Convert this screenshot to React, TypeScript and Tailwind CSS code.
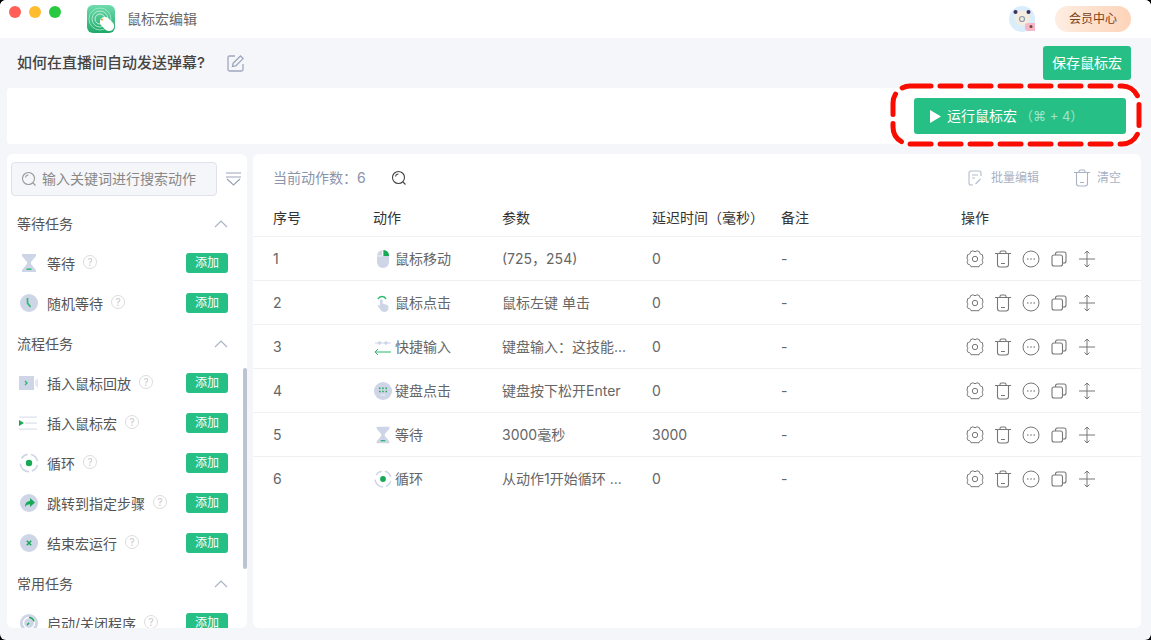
import React from 'react';

const Hourglass = () => (
  <svg width="22" height="22" viewBox="0 0 22 22">
    <path d="M4 2h14v2l-5 6v2l5 6v2H4v-2l5-6v-2L4 4z" fill="#cdd5e6" />
    <path d="M8.500 16.500h5v1.400h-5z" fill="#25b96f" />
  </svg>
);

const Clock = () => (
  <svg width="22" height="22" viewBox="0 0 22 22">
    <circle cx="11" cy="11" r="9" fill="#cdd5e6" />
    <path d="M9.500 6v5l3 4" fill="none" stroke="#25b96f" strokeWidth="1.600" />
  </svg>
);

const Video = () => (
  <svg width="22" height="22" viewBox="0 0 22 22">
    <rect x="1" y="4" width="15" height="14" fill="#cdd5e6" />
    <path d="M17 9l3-3v10l-3-3z" fill="#e4e8f1" />
    <path d="M7 9l2 2-2 2" fill="none" stroke="#25b96f" strokeWidth="1.300" />
  </svg>
);

const ListPlay = () => (
  <svg width="22" height="22" viewBox="0 0 22 22">
    <path d="M1 4.500h18v1.200H1zM7 10.500h12v1.200H7zM1 16.500h18v1.200H1z" fill="#dde2ee" />
    <path d="M1 8l5 3-5 3z" fill="#18a957" />
  </svg>
);

const Loop = () => (
  <svg width="22" height="22" viewBox="0 0 22 22">
    <path d="M3.500 6.500A8.700 8.700 0 0 1 9.500 2.400M13 2.500a8.700 8.700 0 0 1 6.500 6.500M19.500 13a8.700 8.700 0 0 1-5.500 6M11 19.700a8.700 8.700 0 0 1-8.700-8" fill="none" stroke="#cdd5e6" strokeWidth="1.600" />
    <circle cx="11" cy="11" r="3.200" fill="#18a957" />
  </svg>
);

const Jump = () => (
  <svg width="22" height="22" viewBox="0 0 22 22">
    <circle cx="11" cy="11" r="9" fill="#cdd5e6" />
    <path d="M12 6l5 4.500-5 4.500v-2.800c-2.500 0-4 .8-5 2.800 0-3.500 1.800-5.800 5-6z" fill="#18a957" />
  </svg>
);

const Stop = () => (
  <svg width="22" height="22" viewBox="0 0 22 22">
    <circle cx="11" cy="11" r="9" fill="#cdd5e6" />
    <path d="M8.800 8.800l4.400 4.400M13.200 8.800l-4.400 4.400" stroke="#18a957" strokeWidth="1.500" />
  </svg>
);

const Launch = () => (
  <svg width="22" height="22" viewBox="0 0 22 22">
    <circle cx="11" cy="11" r="9" fill="#cdd5e6" />
    <circle cx="11" cy="11" r="5.500" fill="none" stroke="#fff" strokeWidth="1.400" />
    <path d="M11 5.500a5.500 5.500 0 0 1 5 4" fill="none" stroke="#18a957" strokeWidth="1.400" />
    <path d="M9 13l2-2" stroke="#18a957" strokeWidth="1.400" />
  </svg>
);

const MouseMove = () => (
  <svg width="18" height="20" viewBox="0 0 18 20">
    <rect x="3" y="1" width="12" height="18" rx="6" fill="#cdd5e6" />
    <path d="M9.500 1a5.500 5.500 0 0 1 5.500 5.500V7H9.500z" fill="#18a957" />
    <path d="M3 7h5.500V1.200" fill="none" stroke="#fff" strokeWidth=".8" />
  </svg>
);

const MouseClick = () => (
  <svg width="18" height="20" viewBox="0 0 18 20">
    <path d="M4 6a4.500 4.500 0 0 1 8 0" fill="none" stroke="#25b96f" strokeWidth="1.500" />
    <path d="M6 7.500a1.300 1.300 0 0 1 2.600 0v3l4 1.200a2.500 2.500 0 0 1 2 2.500c0 3-1.700 4.800-4.300 4.800-2 0-3-1-4-2.500L3.500 12.500c.8-.8 1.600-.5 2.500.3z" fill="#cdd5e6" />
  </svg>
);

const QuickInput = () => (
  <svg width="20" height="20" viewBox="0 0 20 20">
    <path d="M2 6h16" stroke="#cdd5e6" strokeWidth="1" />
    <circle cx="6.500" cy="6" r="1.800" fill="#cdd5e6" />
    <circle cx="13" cy="6" r="1.800" fill="#cdd5e6" />
    <path d="M18 15H2M5 12l-3 3 3 3" fill="none" stroke="#25b96f" strokeWidth="1" />
  </svg>
);

const Keyboard = () => (
  <svg width="20" height="20" viewBox="0 0 20 20">
    <circle cx="10" cy="10" r="9" fill="#cdd5e6" />
    <path d="M6 6.500h1.500V8H6zM9.200 6.500h1.500V8H9.200zM12.500 6.500H14V8h-1.500zM6 9.700h1.500v1.500H6zM9.200 9.700h1.500v1.500H9.200zM12.500 9.700H14v1.500h-1.500z" fill="#18a957" />
    <path d="M7.500 14h5" stroke="#e8ecf4" strokeWidth="1.200" />
  </svg>
);

const Help = () => (
  <span className="ml-2 flex h-[14px] w-[14px] -translate-y-[1px] items-center justify-center rounded-full border border-[#dcdcdc] text-[10px] leading-none text-[#c8c8c8]">?</span>
);

const SearchIcon = ({ color }: { color: string }) => (
  <svg width="16" height="16" viewBox="0 0 16 16" fill="none" stroke={color} strokeWidth="1.100">
    <circle cx="7.500" cy="7.500" r="6" />
    <path d="M4.500 6.500a3 3 0 0 1 3-2.500M12 12l2.500 2.500" />
  </svg>
);

const Chevron = () => (
  <svg width="14" height="8" viewBox="0 0 14 8" fill="none" stroke="#a9b1c4" strokeWidth="1.100">
    <path d="M1 7l6-6 6 6" />
  </svg>
);

const Trash = ({ color }: { color: string }) => (
  <svg width="18" height="18" viewBox="0 0 18 18" fill="none" stroke={color} strokeWidth="1.100">
    <path d="M1 3.500h16M6 3.500V2.500a1.500 1.500 0 0 1 1.500-1.500h3A1.500 1.500 0 0 1 12 2.500v1M3.500 3.500v11a2.500 2.500 0 0 0 2.500 2.500h6a2.500 2.500 0 0 0 2.500-2.500v-11M7 13.500h4" />
  </svg>
);

const Gear = () => (
  <svg width="18" height="18" viewBox="0 0 18 18" fill="none" stroke="#777" strokeWidth="1">
    <path
      d="M7 1.500c1 1.200 3 1.200 4 0l2.500 1.100c-.1 1.600 1.200 2.900 2.800 2.800L17 9c-1 1-1 3 0 3.900l-1.200 2.400c-1.600-.2-2.900 1.100-2.800 2.200H5c.1-1.100-1.200-2.400-2.800-2.200L1 12.900C2 12 2 10 1 9l.700-3.600C3.300 5.500 4.600 4.200 4.500 2.600z"
      strokeLinejoin="round"
      transform="translate(0 -.8)"
    />
    <circle cx="9" cy="9" r="2.700" />
  </svg>
);

const More = () => (
  <svg width="18" height="18" viewBox="0 0 18 18">
    <circle cx="9" cy="9" r="8" fill="none" stroke="#777" strokeWidth="1" />
    <circle cx="5.800" cy="9" r=".8" fill="#777" />
    <circle cx="9" cy="9" r=".8" fill="#777" />
    <circle cx="12.200" cy="9" r=".8" fill="#777" />
  </svg>
);

const Copy = () => (
  <svg width="16" height="16" viewBox="0 0 16 16" fill="none" stroke="#777" strokeWidth="1.100">
    <rect x="1" y="4" width="10.500" height="11" rx="2" />
    <path d="M4.500 4V3a2 2 0 0 1 2-2H13a2 2 0 0 1 2 2v7a2 2 0 0 1-2 2h-1.500" />
  </svg>
);

const Move = () => (
  <svg width="18" height="18" viewBox="0 0 18 18" fill="none" stroke="#777" strokeWidth="1">
    <path d="M1 9h16M9 1v16M6.500 3.500L9 1l2.500 2.500M6.500 14.500L9 17l2.500-2.500" />
  </svg>
);

const BatchEdit = () => (
  <svg width="14" height="16" viewBox="0 0 14 16" fill="none" stroke="#b4bbcb" strokeWidth="1.100">
    <path d="M5 15H3a2 2 0 0 1-2-2V3a2 2 0 0 1 2-2h8a2 2 0 0 1 2 2v3M4 5h6M4 8h3M7.500 14l5-5" />
  </svg>
);

const Add = () => (
  <button className="flex h-5 w-[42px] items-center justify-center rounded-[3px] bg-[#26c086] text-xs leading-none text-white">添加</button>
);

type Task = { name: string; icon: React.ReactNode };

const sections: { title: string; tasks: Task[] }[] = [
  {
    title: '等待任务',
    tasks: [
      { name: '等待', icon: <Hourglass /> },
      { name: '随机等待', icon: <Clock /> },
    ],
  },
  {
    title: '流程任务',
    tasks: [
      { name: '插入鼠标回放', icon: <Video /> },
      { name: '插入鼠标宏', icon: <ListPlay /> },
      { name: '循环', icon: <Loop /> },
      { name: '跳转到指定步骤', icon: <Jump /> },
      { name: '结束宏运行', icon: <Stop /> },
    ],
  },
  {
    title: '常用任务',
    tasks: [{ name: '启动/关闭程序', icon: <Launch /> }],
  },
];

const rows = [
  { action: '鼠标移动', icon: <MouseMove />, param: '(725，254)', delay: '0' },
  { action: '鼠标点击', icon: <MouseClick />, param: '鼠标左键 单击', delay: '0' },
  { action: '快捷输入', icon: <QuickInput />, param: '键盘输入：这技能...', delay: '0' },
  { action: '键盘点击', icon: <Keyboard />, param: '键盘按下松开Enter', delay: '0' },
  { action: '等待', icon: <Hourglass />, param: '3000毫秒', delay: '3000' },
  { action: '循环', icon: <Loop />, param: '从动作1开始循环 ...', delay: '0' },
];

const gridCols = 'grid grid-cols-[100px_129px_150px_129px_180px_1fr] pl-5';

export default function App() {
  return (
    <div className="h-[640px] w-[1151px] overflow-hidden bg-black font-['Inter','Noto_Sans_CJK_SC',sans-serif]">
      <div className="relative flex h-full flex-col overflow-hidden rounded-[6px] bg-[#f5f6f9]">
        {/* title bar */}
        <div className="flex h-[38px] shrink-0 items-center bg-white pl-[9px] pr-5">
          <div className="flex -translate-y-[7px] gap-2">
            <span className="h-3 w-3 rounded-full bg-[#ff5f57]" />
            <span className="h-3 w-3 rounded-full bg-[#febc2e]" />
            <span className="h-3 w-3 rounded-full bg-[#28c840]" />
          </div>
          <div className="ml-[26px] h-7 w-7 overflow-hidden rounded-md">
            <svg width="28" height="28" viewBox="0 0 28 28">
              <defs>
                <linearGradient id="logo" x1="0" y1="0" x2="0" y2="1">
                  <stop offset="0" stopColor="#6fdcae" />
                  <stop offset="1" stopColor="#1fa868" />
                </linearGradient>
              </defs>
              <rect width="28" height="28" fill="url(#logo)" />
              <circle cx="13" cy="14" r="11" fill="none" stroke="#a8ebcd" strokeWidth=".8" />
              <circle cx="13" cy="14" r="8" fill="none" stroke="#c5f1dd" strokeWidth=".8" />
              <circle cx="13" cy="14" r="5" fill="none" stroke="#e3f9ee" strokeWidth=".8" />
              <rect x="15" y="11" width="10" height="16" rx="5" transform="rotate(-45 20 19)" fill="#fff" />
              <circle cx="15" cy="14.500" r="1" fill="#f79009" />
            </svg>
          </div>
          <span className="ml-3 text-sm leading-5 text-[#666]">鼠标宏编辑</span>
          <div className="ml-auto flex items-center gap-[20px]">
            <svg width="26" height="26" viewBox="0 0 26 26">
              <circle cx="13" cy="13" r="13" fill="#d9edfb" />
              <circle cx="13" cy="12" r="7.500" fill="#f4ecdd" />
              <circle cx="6.500" cy="6" r="2" fill="#3c2f5c" />
              <circle cx="19.500" cy="6" r="2" fill="#3c2f5c" />
              <circle cx="13" cy="13" r="2.500" fill="none" stroke="#8b9ab5" strokeWidth="1.200" />
              <rect x="16" y="17" width="14" height="8" rx="3" fill="#f7b6c8" />
              <circle cx="22" cy="20.500" r="1.500" fill="#6b4a2f" />
            </svg>
            <button className="h-[26px] w-[76px] rounded-full bg-gradient-to-r from-[#fdeee2] to-[#fdd3b8] text-xs leading-none text-[#7c4218]">会员中心</button>
          </div>
        </div>

        {/* heading */}
        <div className="flex h-[50px] shrink-0 items-center pl-[17px] pr-5">
          <h1 className="text-[15px] font-medium leading-5 text-[#444]">如何在直播间自动发送弹幕?</h1>
          <svg className="ml-[22px]" width="18" height="18" viewBox="0 0 18 18" fill="none" stroke="#9fa8bf" strokeWidth="1.300">
            <path d="M8 2H2.500A1.500 1.500 0 0 0 1 3.500v12A1.500 1.500 0 0 0 2.500 17h12a1.500 1.500 0 0 0 1.500-1.500V10" />
            <path d="M5.500 12.500l.7-3.300L13.500 2l2.600 2.600-7.300 7.200z" />
          </svg>
          <button className="ml-auto h-[34px] w-[88px] rounded-[3px] bg-[#26c086] text-sm leading-none text-white">保存鼠标宏</button>
        </div>

        {/* run bar */}
        <div className="ml-[7px] mr-[10px] flex h-14 shrink-0 items-center justify-end rounded-[3px] bg-white pr-[15px]">
          <button className="flex h-9 w-[212px] items-center rounded-[3px] bg-[#26c086] pl-4 text-white">
            <svg width="11" height="13" viewBox="0 0 11 13" fill="#fff">
              <path d="M0 0l11 6.500L0 13z" />
            </svg>
            <span className="ml-[6px] text-sm leading-none">运行鼠标宏</span>
            <span className="ml-[3px] text-[13px] leading-none text-[#a3e3cb]">（⌘ + 4）</span>
          </button>
        </div>

        {/* panels */}
        <div className="mt-[10px] flex h-[474px] shrink-0 gap-[6px] pl-[7px] pr-[10px]">
          <div className="relative w-[240px] shrink-0 overflow-hidden rounded-md bg-white">
            <div className="flex items-center pb-[7px] pl-1 pt-2">
              <div className="flex h-[34px] w-[206px] items-center rounded-[4px] border border-[#dfe2ec] bg-[#f5f6f9] pl-[9px]">
                <SearchIcon color="#999" />
                <span className="ml-[5px] text-sm leading-none text-[#888]">输入关键词进行搜索动作</span>
              </div>
              <svg className="ml-[9px]" width="15" height="14" viewBox="0 0 15 14" fill="none" stroke="#9aa3ba" strokeWidth="1.200">
                <path d="M0 1h15M0 5h15M1 7l6.500 6L14 7" />
              </svg>
            </div>
            {sections.map(s => (
              <div key={s.title}>
                <div className="flex h-10 items-center justify-between pl-[10px] pr-[19px] pt-[2px]">
                  <span className="text-sm leading-5 text-[#555]">{s.title}</span>
                  <Chevron />
                </div>
                {s.tasks.map(t => (
                  <div key={t.name} className="flex h-10 items-center pl-[11px] pr-[19px]">
                    <span className="flex w-[22px] justify-center">{t.icon}</span>
                    <span className="ml-[7px] translate-y-[1px] text-sm leading-5 text-[#555]">{t.name}</span>
                    <Help />
                    <span className="ml-auto"><Add /></span>
                  </div>
                ))}
              </div>
            ))}
            <div className="absolute right-0 top-[214px] h-[201px] w-1 rounded-full bg-[#bcc4d4]" />
          </div>

          <div className="flex-1 overflow-hidden rounded-md bg-white">
            <div className="flex h-12 items-center pl-5 pr-5">
              <span className="text-sm leading-5 text-[#8a94ab]">当前动作数：6</span>
              <span className="ml-[25px]"><SearchIcon color="#444" /></span>
              <div className="ml-auto flex items-center text-xs leading-none text-[#a9b1c4]">
                <BatchEdit />
                <span className="ml-[9px]">批量编辑</span>
                <span className="ml-[34px]"><Trash color="#a9b1c4" /></span>
                <span className="ml-[6px]">清空</span>
              </div>
            </div>
            <div className={`${gridCols} h-[35px] items-center border-b border-[#f0f0f0] pb-[2px] text-sm leading-5 text-[#333]`}>
              <span>序号</span>
              <span>动作</span>
              <span>参数</span>
              <span>延迟时间（毫秒）</span>
              <span>备注</span>
              <span>操作</span>
            </div>
            {rows.map((r, i) => (
              <div key={i} className={`${gridCols} h-11 items-center border-b border-[#f0f0f0] text-sm leading-5 text-[#666] last:border-b-0`}>
                <span>{i + 1}</span>
                <span className="flex items-center gap-[2px]">
                  <span className="flex w-5 justify-center">{r.icon}</span>
                  {r.action}
                </span>
                <span>{r.param}</span>
                <span>{r.delay}</span>
                <span>-</span>
                <span className="flex items-center">
                  <span className="flex w-7 justify-center"><Gear /></span>
                  <span className="flex w-7 justify-center"><Trash color="#777" /></span>
                  <span className="flex w-7 justify-center"><More /></span>
                  <span className="flex w-7 justify-center"><Copy /></span>
                  <span className="flex w-7 justify-center"><Move /></span>
                </span>
              </div>
            ))}
          </div>
        </div>

        {/* highlight drawn on the screenshot */}
        <svg className="absolute left-[889px] top-[82px]" width="254" height="66" viewBox="0 0 254 66" fill="none">
          <rect x="4" y="4" width="246" height="58" rx="17" stroke="#f80d00" strokeWidth="5" strokeLinecap="round" strokeDasharray="21 9" />
        </svg>
      </div>
    </div>
  );
}
